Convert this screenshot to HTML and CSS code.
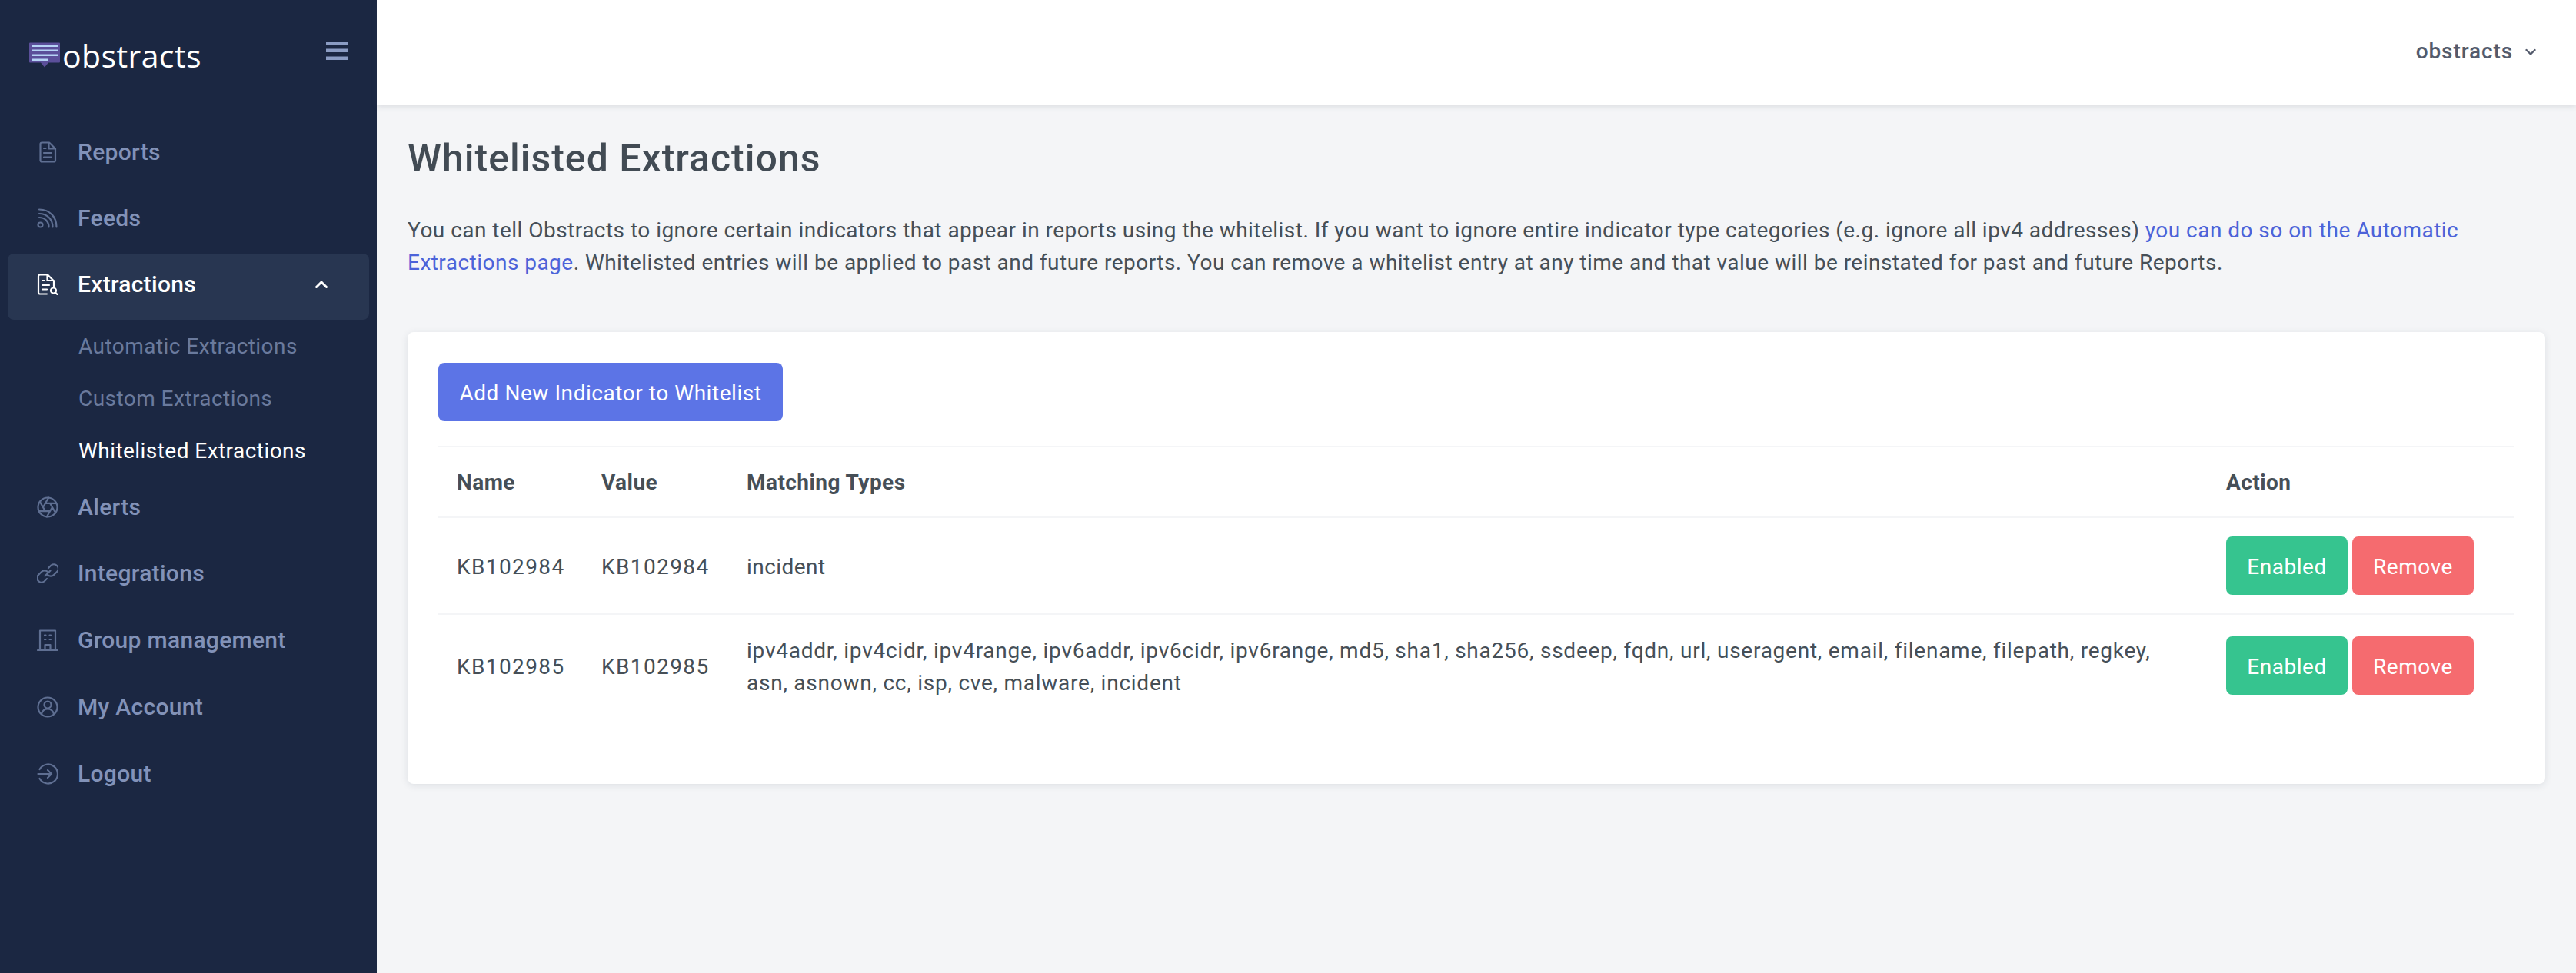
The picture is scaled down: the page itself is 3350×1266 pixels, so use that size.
FILE: index.html
```html
<!DOCTYPE html>
<html lang="en">
<head>
<meta charset="utf-8">
<title>Whitelisted Extractions</title>
<link rel="stylesheet" href="styles.css">
</head>
<body>
<div class="app">
  <aside class="sidebar">
    <div class="brand">
      <a class="logo">
        <svg class="logo-mark" viewBox="0 0 40 32"><path fill="#5b4f9a" d="M1 0h38a1 1 0 0 1 1 1v24a1 1 0 0 1-1 1H25l-5 6-5-6H1a1 1 0 0 1-1-1V1a1 1 0 0 1 1-1z"/><path fill="#b5d3f5" d="M3 3h34v2.400H3zM3 9h34v2.400H3zM3 15h34v2.400H3zM3 21h22v2.400H3z"/></svg>
        <span class="logo-text">obstracts</span>
      </a>
      <svg class="burger" viewBox="0 0 28 24"><path fill="#8b9cc3" d="M0 0h28v4.500H0zM0 9.500h28V14H0zM0 19.500h28V24H0z"/></svg>
    </div>
    <nav class="nav">
      <a class="nav-item"><svg class="ico" viewBox="0 0 28 28"><path d="M6.500 1.500h9.500l8 8v15a2 2 0 0 1-2 2H6.500a2 2 0 0 1-2-2v-21a2 2 0 0 1 2-2zM15.500 2v7.500H23.500M9 9h2.500M9 15h10M9 20.500h10"/></svg><span>Reports</span></a>
      <a class="nav-item"><svg class="ico" viewBox="0 0 28 28"><circle cx="4.500" cy="22.500" r="3"/><path d="M3 13c7.500 0 12.500 5.500 12.500 12.500M3 8c10.500 0 17.500 7.500 17.500 17.500M3 2.500c14 0 22.500 10 22.500 23"/></svg><span>Feeds</span></a>
      <div class="group">
        <a class="nav-item is-open"><svg class="ico" viewBox="0 0 28 28"><path d="M13 26.500H4a2 2 0 0 1-2-2v-21a2 2 0 0 1 2-2h10l8 8v7M13.500 2v7H22M7 9h3M7 15h9M7 20.500h6"/><circle cx="21.500" cy="22" r="3.500"/><path d="M24 24.500l3 3"/></svg><span class="nav-label">Extractions</span><svg class="caret" viewBox="0 0 16 10"><path d="M1.500 8.500L8 2l6.500 6.500"/></svg></a>
        <div class="sub">
          <a class="sub-item">Automatic Extractions</a>
          <a class="sub-item">Custom Extractions</a>
          <a class="sub-item is-current">Whitelisted Extractions</a>
        </div>
      </div>
      <a class="nav-item"><svg class="ico" viewBox="0 0 28 28"><circle cx="14" cy="14" r="12.500"/><path d="M20 14L12.800 26.440M17 19.200L2.630 19.180M11 19.200L3.830 6.740M8 14L15.200 1.560M11 8.800L25.370 8.820M17 8.800L24.170 21.260"/></svg><span>Alerts</span></a>
      <a class="nav-item"><svg class="ico" viewBox="0 0 28 28"><path d="M10.500 17.500l7-7M15 7l3.500-3.500a5.700 5.700 0 0 1 8 8L22 16a5.700 5.700 0 0 1-8 0M13 21l-3.500 3.500a5.700 5.700 0 0 1-8-8L6 12a5.700 5.700 0 0 1 8 0"/></svg><span>Integrations</span></a>
      <a class="nav-item nav-item--wide"><svg class="ico" viewBox="0 0 28 28"><path d="M4 27V1.500h20V27M1 27h26M10 7.500h1.500M16.500 7.500H18M10 13h1.500M16.500 13H18M10.500 27v-7h7v7"/></svg><span>Group management</span></a>
      <a class="nav-item nav-item--wide"><svg class="ico" viewBox="0 0 28 28"><circle cx="14" cy="14" r="12.500"/><circle cx="14" cy="11" r="4.500"/><path d="M6 23c1-4 4-6.500 8-6.500s7 2.500 8 6.500"/></svg><span>My Account</span></a>
      <a class="nav-item nav-item--wide"><svg class="ico" viewBox="0 0 28 28"><path d="M3.500 8a12.500 12.500 0 1 1 0 12M1.500 14H19M14 9l5 5-5 5"/></svg><span>Logout</span></a>
    </nav>
  </aside>
  <div class="main">
    <header class="topbar">
      <a class="user">obstracts<svg class="user-caret" viewBox="0 0 14 10"><path d="M1.500 2l5.500 5.500L12.500 2"/></svg></a>
    </header>
    <main class="content">
      <h1 class="title">Whitelisted Extractions</h1>
      <p class="intro">You can tell Obstracts to ignore certain indicators that appear in reports using the whitelist. If you want to ignore entire indicator type categories (e.g. ignore all ipv4 addresses) <a class="link">you can do so on the Automatic Extractions page</a>. Whitelisted entries will be applied to past and future reports. You can remove a whitelist entry at any time and that value will be reinstated for past and future Reports.</p>
      <section class="card">
        <button class="btn btn-primary">Add New Indicator to Whitelist</button>
        <table class="table">
          <colgroup><col class="c-name"><col class="c-value"><col><col class="c-action"></colgroup>
          <thead>
            <tr><th>Name</th><th>Value</th><th>Matching Types</th><th>Action</th></tr>
          </thead>
          <tbody>
            <tr>
              <td class="cell-id">KB102984</td><td class="cell-id">KB102984</td><td class="cell-text">incident</td>
              <td><div class="actions"><button class="btn btn-success">Enabled</button><button class="btn btn-danger">Remove</button></div></td>
            </tr>
            <tr>
              <td class="cell-id">KB102985</td><td class="cell-id">KB102985</td>
              <td class="cell-text cell-types">ipv4addr, ipv4cidr, ipv4range, ipv6addr, ipv6cidr, ipv6range, md5, sha1, sha256, ssdeep, fqdn, url, useragent, email, filename, filepath, regkey, asn, asnown, cc, isp, cve, malware, incident</td>
              <td><div class="actions"><button class="btn btn-success">Enabled</button><button class="btn btn-danger">Remove</button></div></td>
            </tr>
          </tbody>
        </table>
      </section>
    </main>
  </div>
</div>
</body>
</html>
```
FILE: styles.css
```css
* { box-sizing: border-box; }
html, body { margin: 0; height: 100%; }
body {
  font-family: "Roboto", "Liberation Sans", sans-serif;
  font-size: 28px;
  line-height: 42px;
  letter-spacing: .45px;
  color: #464f57;
  background: #f4f5f7;
  overflow: hidden;
}
.app { display: flex; height: 1266px; }

.sidebar { flex: 0 0 490px; background: #1b2742; display: flex; flex-direction: column; }
.brand { height: 136px; display: flex; align-items: flex-start; justify-content: space-between; padding: 54px 38px 0 38px; }
.logo { display: flex; align-items: flex-start; gap: 3px; }
.logo-mark { width: 40px; height: 33px; margin-top: 1px; }
.logo-text { font-family: "Open Sans", sans-serif; font-size: 41px; line-height: 36px; letter-spacing: .4px; color: #fff; font-weight: 400; }
.burger { width: 28px; height: 24px; }

.nav { display: flex; flex-direction: column; padding: 22px 10px 0; }
.nav-item { height: 86px; display: flex; align-items: center; padding: 0 54px 6px 38px; gap: 25px; font-size: 30px; letter-spacing: .3px; color: #8292b8; font-weight: 500; }
.nav-item--wide { height: 87px; }
.ico { width: 28px; height: 28px; flex: none; fill: none; stroke: #5f6f92; stroke-width: 2.200; stroke-linecap: round; stroke-linejoin: round; }
.nav-item.is-open { background: #283651; border-radius: 8px; color: #fff; }
.is-open .ico { stroke: #fff; }
.nav-label { flex: 1; }
.caret { width: 16px; height: 10px; fill: none; stroke: #fff; stroke-width: 3; stroke-linecap: round; stroke-linejoin: round; }
.sub { display: flex; flex-direction: column; padding: 0 0 0 92px; }
.sub-item { height: 68px; display: flex; align-items: center; padding-top: 2px; color: #6a7a9d; }
.sub-item.is-current { color: #fff; }

.main { flex: 1; min-width: 0; display: flex; flex-direction: column; }
.topbar { height: 136px; flex: none; background: #fff; display: flex; justify-content: flex-end; padding: 46px 52px 0 0; box-shadow: 0 2px 8px rgba(60,70,90,.16); position: relative; }
.user { display: flex; align-items: flex-start; gap: 16px; font-weight: 500; letter-spacing: .9px; color: #545b6c; }
.user-caret { width: 14px; height: 10px; margin-top: 17px; fill: none; stroke: #545b6c; stroke-width: 2.400; stroke-linecap: round; stroke-linejoin: round; }

.content { padding: 41px 40px 0; }
.title { margin: 0; font-size: 50px; line-height: 58px; letter-spacing: 1px; font-weight: 500; color: #424b54; }
.intro { margin: 44px 0 0; letter-spacing: .47px; }
.link { color: #4c63d9; }

.card { margin-top: 69px; height: 588px; background: #fff; border-radius: 8px; padding: 40px; box-shadow: 0 2px 10px rgba(60,70,90,.12); }
.btn { height: 76px; border: 0; border-radius: 8px; color: #fff; font: inherit; letter-spacing: .55px; padding: 4px 0 0; display: inline-flex; align-items: center; justify-content: center; }
.btn-primary { background: #5c74e6; width: 448px; }
.btn-success { background: #36c48f; width: 158px; }
.btn-danger { background: #f56b6f; width: 158px; }

.table { width: 100%; border-collapse: collapse; table-layout: fixed; margin-top: 32px; }
.c-name { width: 188px; }
.c-value { width: 189px; }
.c-action { width: 399px; }
.table th, .table td { text-align: left; padding: 24px; border-top: 2px solid #f4f5f7; vertical-align: middle; }
.table th { font-weight: 700; height: 92px; padding: 2px 24px 0; }
.table .cell-id, .table .cell-text { padding-top: 26px; padding-bottom: 22px; }
.cell-id { letter-spacing: 1.4px; }
.cell-types { letter-spacing: .75px; }
.actions { display: flex; gap: 6px; }
```
